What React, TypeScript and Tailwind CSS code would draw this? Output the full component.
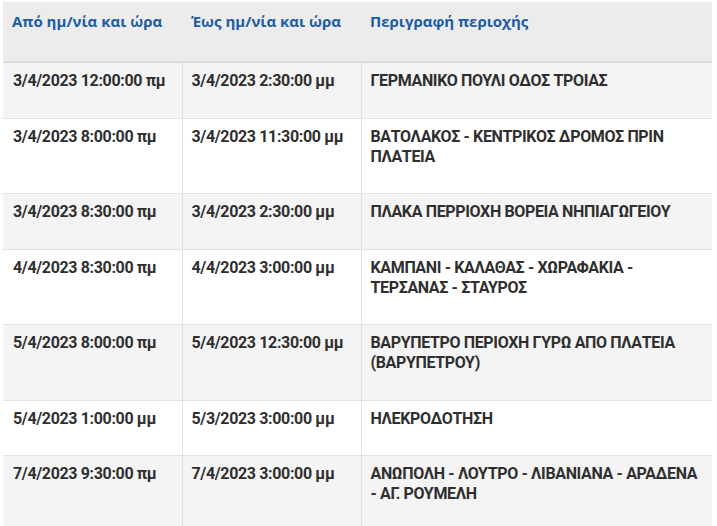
const rows = [
  { from: '3/4/2023 12:00:00 πμ', to: '3/4/2023 2:30:00 μμ', area: 'ΓΕΡΜΑΝΙΚΟ ΠΟΥΛΙ ΟΔΟΣ ΤΡΟΙΑΣ' },
  { from: '3/4/2023 8:00:00 πμ', to: '3/4/2023 11:30:00 μμ', area: 'ΒΑΤΟΛΑΚΟΣ - ΚΕΝΤΡΙΚΟΣ ΔΡΟΜΟΣ ΠΡΙΝ ΠΛΑΤΕΙΑ' },
  { from: '3/4/2023 8:30:00 πμ', to: '3/4/2023 2:30:00 μμ', area: 'ΠΛΑΚΑ ΠΕΡΡΙΟΧΗ ΒΟΡΕΙΑ ΝΗΠΙΑΓΩΓΕΙΟΥ' },
  { from: '4/4/2023 8:30:00 πμ', to: '4/4/2023 3:00:00 μμ', area: 'ΚΑΜΠΑΝΙ - ΚΑΛΑΘΑΣ - ΧΩΡΑΦΑΚΙΑ - ΤΕΡΣΑΝΑΣ - ΣΤΑΥΡΟΣ' },
  { from: '5/4/2023 8:00:00 πμ', to: '5/4/2023 12:30:00 μμ', area: 'ΒΑΡΥΠΕΤΡΟ ΠΕΡΙΟΧΗ ΓΥΡΩ ΑΠΟ ΠΛΑΤΕΙΑ (ΒΑΡΥΠΕΤΡΟΥ)' },
  { from: '5/4/2023 1:00:00 μμ', to: '5/3/2023 3:00:00 μμ', area: 'ΗΛΕΚΡΟΔΟΤΗΣΗ' },
  { from: '7/4/2023 9:30:00 πμ', to: '7/4/2023 3:00:00 μμ', area: 'ΑΝΩΠΟΛΗ - ΛΟΥΤΡΟ - ΛΙΒΑΝΙΑΝΑ - ΑΡΑΔΕΝΑ - ΑΓ. ΡΟΥΜΕΛΗ' },
]

const cell =
  "align-top pr-2 pt-2 pb-[26.5px] text-[16px] leading-5 font-bold text-[#2f2f2f] font-['Roboto',sans-serif] tracking-[-0.35px]"

export default function App() {
  return (
    <div className="pl-[3px] pt-[2px] bg-white min-h-[526px]">
      <table className="w-[709px] border-collapse table-fixed">
        <colgroup>
          <col className="w-[179px]" />
          <col className="w-[179px]" />
          <col />
        </colgroup>
        <thead>
          <tr className="bg-[#ececec] border-b-2 border-[#dcdcdc]">
            {['Από ημ/νία και ώρα', 'Έως ημ/νία και ώρα', 'Περιγραφή περιοχής'].map((h) => (
              <th
                key={h}
                className="text-left align-top pl-[9px] pr-2 pt-[9px] pb-[30px] text-[15px] leading-5 font-bold text-[#1d5ca4] font-['Open_Sans',sans-serif]"
              >
                {h}
              </th>
            ))}
          </tr>
        </thead>
        <tbody>
          {rows.map((r, i) => (
            <tr key={i} className={`border-b border-[#e2e2e2] ${i % 2 === 0 ? 'bg-[#f4f4f4]' : 'bg-white'}`}>
              <td className={`${cell} pl-[10px] border-r border-[#e2e2e2]`}>{r.from}</td>
              <td className={`${cell} pl-[9px] border-r border-[#e2e2e2]`}>{r.to}</td>
              <td className={`${cell} pl-[9px]`}>{r.area}</td>
            </tr>
          ))}
        </tbody>
      </table>
    </div>
  )
}
